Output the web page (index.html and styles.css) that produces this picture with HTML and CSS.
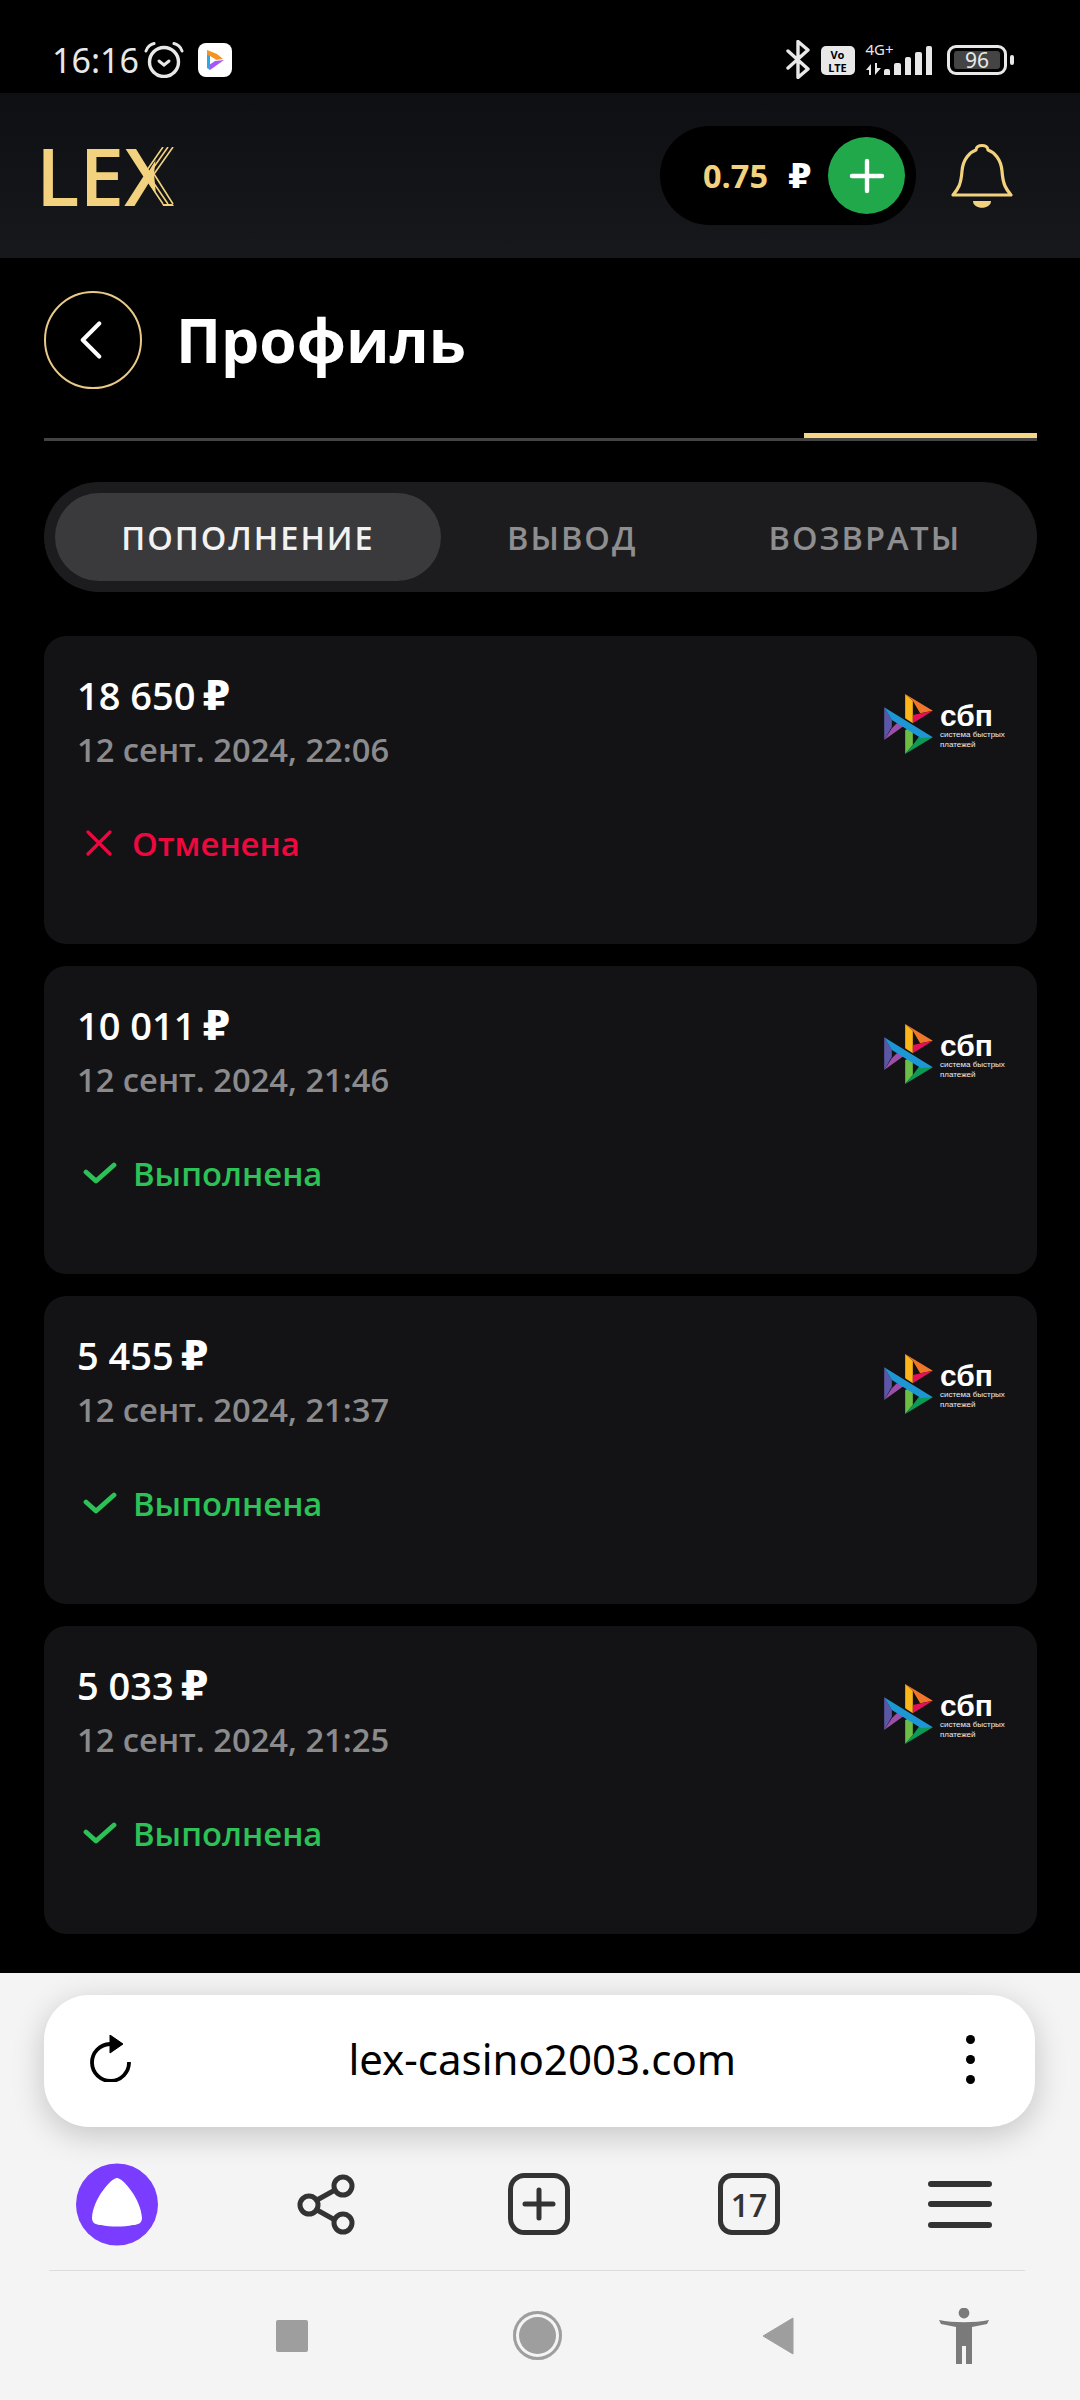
FILE: index.html
```html
<!DOCTYPE html>
<html lang="ru">
<head>
<meta charset="utf-8">
<title>Профиль</title>
<link rel="stylesheet" href="styles.css">
</head>
<body>
<div class="screen">
  <div class="statusbar">
    <div class="status-left">
      <span class="time">16:16</span>
      <svg class="alarm" viewBox="0 0 40 36"><g fill="none" stroke="#e8e8e8" stroke-linecap="round"><circle cx="20" cy="20" r="14.5" stroke-width="3.4"/><path d="M2 9C3 5 7 2 10 1.500M38 9C37 5 33 2 30 1.500" stroke-width="3"/><path d="M15 19l5 4 5-4" stroke-width="3"/></g></svg>
      <span class="appicon"><svg viewBox="0 0 34 34"><path d="M9 7l10 4 6 5-8 1-8-4z" fill="#f7931e"/><path d="M12 13l6 3.500-6 3.500z" fill="#fff"/><path d="M26 17l-14 10-1-5 6-4z" fill="#a855f7"/><path d="M9 12l3 1v14l-3-2z" fill="#29abe2"/></svg></span>
    </div>
    <div class="status-right">
      <svg class="bt" viewBox="0 0 24 39"><path d="M2 11l20 18-10 8.500V1.500L22 10 2 28" fill="none" stroke="#e8e8e8" stroke-width="3.400" stroke-linejoin="round" stroke-linecap="round"/></svg>
      <span class="volte"><span>Vo</span><span>LTE</span></span>
      <div class="net">
        <span class="net-label">4G+</span>
        <svg class="net-arrows" viewBox="0 0 15 12"><path d="M5 1v11H3V7H0zM9 12V0h2v5h4z" fill="#e8e8e8"/></svg>
      </div>
      <div class="bars"><i class="b1"></i><i class="b2"></i><i class="b3"></i><i class="b4"></i><i class="b5"></i></div>
      <div class="battery"><span class="cell">96</span></div><span class="nub"></span>
    </div>
  </div>

  <header class="topbar">
    <div class="logo">
      <span class="logo-text">LEX</span>
      <svg class="logo-stripes" viewBox="0 0 131 57"><path d="M110 27L113 -1H134V58H113z" fill="#131418"/><g stroke="#f2d27e" stroke-width="1.600" fill="none"><path d="M119 0L101 26M124 0L105 27M129 0L110 27M119 57L101 30M124 57L105 29M129 57L110 27"/></g></svg>
    </div>
    <div class="topbar-right">
      <div class="balance">
        <span class="amount">0.75</span>
        <span class="rub">₽</span>
        <span class="plus"><svg viewBox="0 0 36 36"><path d="M18 3v30M3 18h30" stroke="#fff" stroke-width="4.400" stroke-linecap="round"/></svg></span>
      </div>
      <svg class="bell" viewBox="0 0 62 66"><g fill="none" stroke="#f2d27e" stroke-width="3.200" stroke-linejoin="round"><path d="M2 52c5-6 8-10 9-24C12 16 19 9 25 7c0-6 12-6 12 0 6 2 13 9 14 21 1 14 4 18 9 24z"/></g><path d="M22 58h18c0 9-18 9-18 0z" fill="#f2d27e"/></svg>
    </div>
  </header>

  <main class="content">
    <div class="titlerow">
      <button class="back"><svg viewBox="0 0 24 42"><path d="M21 3L3 21l18 18" fill="none" stroke="#fff" stroke-width="4.400" stroke-linecap="round" stroke-linejoin="round"/></svg></button>
      <h1 class="title">Профиль</h1>
    </div>
    <div class="rule"><span class="rule-active"></span></div>

    <nav class="tabs">
      <span class="tab tab-active">ПОПОЛНЕНИЕ</span>
      <span class="tab tab-mid">ВЫВОД</span>
      <span class="tab tab-last">ВОЗВРАТЫ</span>
    </nav>

    <section class="cards">
      <article class="card">
        <div class="card-head">
          <div>
            <div class="sum">18 650 <span class="cur">₽</span></div>
            <div class="date">12 сент. 2024, 22:06</div>
          </div>
          <div class="sbp">
            <svg class="sbp-mark" viewBox="72 42 146 180"><use href="#sbpmark"/></svg>
            <div class="sbp-words"><span class="sbp-big">сбп</span><span class="sbp-small">система быстрых<br>платежей</span></div>
          </div>
        </div>
        <div class="state bad"><svg viewBox="0 0 26 26"><path d="M2 2l22 22M24 2L2 24" stroke="#f0073f" stroke-width="3.200" stroke-linecap="round"/></svg>Отменена</div>
      </article>
      <article class="card">
        <div class="card-head">
          <div>
            <div class="sum">10 011 <span class="cur">₽</span></div>
            <div class="date">12 сент. 2024, 21:46</div>
          </div>
          <div class="sbp">
            <svg class="sbp-mark" viewBox="72 42 146 180"><use href="#sbpmark"/></svg>
            <div class="sbp-words"><span class="sbp-big">сбп</span><span class="sbp-small">система быстрых<br>платежей</span></div>
          </div>
        </div>
        <div class="state ok"><svg viewBox="0 0 34 22"><path d="M3 10l10 9L31 3" fill="none" stroke="#2cc257" stroke-width="4.800" stroke-linecap="round" stroke-linejoin="round"/></svg>Выполнена</div>
      </article>
      <article class="card">
        <div class="card-head">
          <div>
            <div class="sum">5 455 <span class="cur">₽</span></div>
            <div class="date">12 сент. 2024, 21:37</div>
          </div>
          <div class="sbp">
            <svg class="sbp-mark" viewBox="72 42 146 180"><use href="#sbpmark"/></svg>
            <div class="sbp-words"><span class="sbp-big">сбп</span><span class="sbp-small">система быстрых<br>платежей</span></div>
          </div>
        </div>
        <div class="state ok"><svg viewBox="0 0 34 22"><path d="M3 10l10 9L31 3" fill="none" stroke="#2cc257" stroke-width="4.800" stroke-linecap="round" stroke-linejoin="round"/></svg>Выполнена</div>
      </article>
      <article class="card">
        <div class="card-head">
          <div>
            <div class="sum">5 033 <span class="cur">₽</span></div>
            <div class="date">12 сент. 2024, 21:25</div>
          </div>
          <div class="sbp">
            <svg class="sbp-mark" viewBox="72 42 146 180"><use href="#sbpmark"/></svg>
            <div class="sbp-words"><span class="sbp-big">сбп</span><span class="sbp-small">система быстрых<br>платежей</span></div>
          </div>
        </div>
        <div class="state ok"><svg viewBox="0 0 34 22"><path d="M3 10l10 9L31 3" fill="none" stroke="#2cc257" stroke-width="4.800" stroke-linecap="round" stroke-linejoin="round"/></svg>Выполнена</div>
      </article>
    </section>
  </main>

  <footer class="browser">
    <div class="urlbar">
      <svg class="reload" viewBox="0 0 42 47"><path d="M21 9A18.500 18.500 0 1 0 40 27" fill="none" stroke="#000" stroke-width="3.800"/><path d="M21 0l13 9-13 9z" fill="#000" stroke="#000" stroke-linejoin="round"/></svg>
      <span class="url">lex-casino2003.com</span>
      <span class="dots"><i></i><i></i><i></i></span>
    </div>
    <div class="toolbar">
      <svg class="alice" viewBox="0 0 82 83"><circle cx="41" cy="41.500" r="41" fill="#7a3dff"/><path d="M41 15c-6 0-24 21-25 40 0 5 4 7 9 7 10 2 22 2 32 0 5 0 9-2 9-7-1-19-19-40-25-40z" fill="#fff"/></svg>
      <svg class="share" viewBox="0 0 58 61"><g fill="none" stroke="#333" stroke-width="5"><circle cx="46" cy="12" r="9"/><circle cx="12" cy="31" r="9"/><circle cx="46" cy="49" r="9"/><path d="M20 26l18-10M20 36l18 10"/></g></svg>
      <svg class="newtab" viewBox="0 0 62 62"><rect x="2.500" y="2.500" width="57" height="57" rx="14" fill="none" stroke="#333" stroke-width="5"/><path d="M31 17v28M17 31h28" stroke="#333" stroke-width="5" stroke-linecap="round"/></svg>
      <div class="tabcount">17</div>
      <div class="burger"><i></i><i></i><i></i></div>
    </div>
    <div class="nav">
      <span class="nav-square"></span>
      <span class="nav-circle"></span>
      <svg class="nav-back" viewBox="0 0 32 38"><path d="M31 1v36L1 19z" fill="#9e9e9e" stroke="#9e9e9e" stroke-linejoin="round"/></svg>
      <svg class="nav-person" viewBox="0 0 50 56"><circle cx="25" cy="5" r="5.400" fill="#7a7a7a"/><path d="M0 12l2 4 15 3v37h6V38h4v18h6V19l15-3 2-4c-14 3-36 3-50 0z" fill="#7a7a7a"/></svg>
    </div>
  </footer>
</div>

<svg class="defs" width="0" height="0">
  <defs>
    <g id="sbpmark">
      <path d="M72 82v98l23-40v-20z" fill="#5b57a6"/>
      <path d="M72 180l63-45-25-5-15 15z" fill="#9b4ea8"/>
      <path d="M135 42l23 20v68l-23-15z" fill="#fbb61a"/>
      <path d="M135 42l83 50-38 8-22-38z" fill="#f0762a"/>
      <path d="M158 105l60-13-60 38z" fill="#e2125a"/>
      <path d="M135 150l23-10v55l-23 27z" fill="#6bbd45"/>
      <path d="M135 222l83-50-40-4-20 27z" fill="#0d9a56"/>
      <path d="M72 82l146 90-36 2L95 120z" fill="#1d97d4"/>
    </g>
  </defs>
</svg>
</body>
</html>
```
FILE: styles.css
```css
* { box-sizing: border-box; }
html, body { margin: 0; padding: 0; background: #000; }
body { font-family: "Open Sans", "Noto Sans", sans-serif; }
.screen { width: 1080px; height: 2400px; display: flex; flex-direction: column; overflow: hidden; background: #000; }
.defs { position: absolute; }

.statusbar { height: 93px; flex: none; display: flex; justify-content: space-between; align-items: flex-start; padding: 36px 66px 0 52px; }
.status-left { display: flex; align-items: center; height: 40px; margin-top: 4px; }
.time { font-family: "Noto Sans", sans-serif; font-size: 34px; line-height: 40px; color: #e8e8e8; width: 92px; }
.alarm { width: 40px; height: 36px; margin-top: -1px; }
.appicon { width: 34px; height: 34px; margin-left: 14px; background: #fff; border-radius: 8px; display: block; }
.appicon svg { display: block; width: 34px; height: 34px; }
.status-right { display: flex; align-items: flex-end; height: 40px; }
.bt { width: 24px; height: 39px; margin: 0 11px -3px 0; }
.volte { width: 34px; height: 29px; margin: 0 11px 1px 0; background: #e8e8e8; border-radius: 5px; display: flex; flex-direction: column; align-items: center; justify-content: center; color: #000; font-family: "Noto Sans", sans-serif; font-size: 11px; line-height: 13px; font-weight: 700; }
.net { width: 18px; height: 33px; margin-bottom: 1px; display: flex; flex-direction: column; justify-content: space-between; }
.net-label { font-family: "Noto Sans", sans-serif; font-size: 15px; line-height: 14px; color: #e8e8e8; white-space: nowrap; }
.net-arrows { width: 15px; height: 12px; }
.bars { display: flex; align-items: flex-end; gap: 4px; height: 30px; margin: 0 15px 1px 0; }
.bars i { width: 6.500px; background: #e8e8e8; border-radius: 2px 2px 0 0; display: block; }
.bars .b1 { height: 6px; } .bars .b2 { height: 12px; } .bars .b3 { height: 18px; } .bars .b4 { height: 23px; } .bars .b5 { height: 29px; }
.battery { width: 60px; height: 30px; border: 3px solid #e8e8e8; border-radius: 9px; padding: 3px 4px; margin-bottom: 1px; }
.cell { display: block; width: 100%; height: 100%; background: #444; border-radius: 3px; color: #e8e8e8; font-family: "Noto Sans", sans-serif; font-size: 21px; line-height: 18px; text-align: center; }
.nub { width: 4px; height: 10px; background: #e8e8e8; margin: 0 0 11px 3px; border-radius: 2px; }

.topbar { height: 165px; flex: none; background: linear-gradient(180deg, #0e0f13, #17181c); display: flex; justify-content: space-between; align-items: center; padding: 0 67px 0 44px; }
.logo { position: relative; width: 131px; height: 57px; }
.logo-text { display: block; font-family: "Open Sans", sans-serif; font-weight: 600; font-size: 80px; line-height: 55px; color: #f2d27e; margin-left: -8px; white-space: nowrap; }
.logo-stripes { position: absolute; left: 0; top: 0; width: 131px; height: 57px; }
.topbar-right { display: flex; align-items: center; }
.balance { width: 256px; height: 99px; background: #000; border-radius: 50px; display: flex; align-items: center; padding-left: 43px; }
.amount { font-size: 32.500px; font-weight: 700; color: #f2d27e; width: 85px; }
.rub { font-size: 34px; font-weight: 700; color: #fff; width: 40px; font-family: "DejaVu Sans", sans-serif; }
.plus { width: 77px; height: 77px; flex: none; background: #21a84a; border-radius: 50%; display: flex; align-items: center; justify-content: center; }
.plus svg { width: 36px; height: 36px; }
.bell { width: 62px; height: 66px; margin-left: 35px; }

.content { flex: 1; padding: 0 43px 0 44px; }
.titlerow { height: 180px; padding-top: 33px; display: flex; align-items: flex-start; }
.back { width: 98px; height: 98px; border: 2px solid #e9c987; border-radius: 50%; background: transparent; padding: 0; display: flex; align-items: center; justify-content: center; }
.back svg { width: 22px; height: 40px; margin-right: 5px; }
.title { margin: -1px 0 0 34px; font-size: 60.500px; line-height: 100px; font-weight: 700; color: #fff; }
.rule { height: 3px; background: #444; position: relative; }
.rule-active { position: absolute; right: 0; bottom: 3px; width: 233px; height: 5px; background: #f5d586; box-shadow: 0 -30px 40px rgba(245,213,134,.02); }

.tabs { height: 110px; margin-top: 41px; background: #1c1c1e; border-radius: 55px; padding: 11px; display: flex; align-items: center; }
.tab { font-size: 32.500px; font-weight: 600; letter-spacing: 2px; color: #8e8e90; white-space: nowrap; }
.tab-active { width: 386px; height: 88px; background: #3a3a3c; border-radius: 44px; color: #f2f2f2; display: flex; align-items: center; justify-content: center; }
.tab-mid { margin-left: 66px; }
.tab-last { margin-left: 131px; }

.cards { margin-top: 44px; display: flex; flex-direction: column; gap: 22px; }
.card { height: 308px; background: #131315; border-radius: 22px; padding: 34px 32px 0 33px; }
.card-head { display: flex; justify-content: space-between; }
.sum { font-size: 38px; line-height: 50px; font-weight: 600; color: #fff; white-space: nowrap; }
.cur { font-family: "DejaVu Sans", sans-serif; font-weight: 700; font-size: 40px; margin-left: -3px; }
.date { font-size: 32.700px; line-height: 44px; margin-top: 7px; font-weight: 600; color: #8b8b8d; white-space: nowrap; }
.state { margin-top: 49px; height: 44px; display: flex; align-items: center; font-size: 32.800px; font-weight: 600; }
.state svg { width: 34px; height: 22px; margin: 0 16px 0 6px; }
.bad { color: #f0073f; }
.bad svg { width: 26px; height: 26px; margin: 0 20px 0 9px; }
.ok { color: #2cc257; }
.sbp { display: flex; align-items: flex-start; margin-top: 24px; }
.sbp-mark { width: 49px; height: 60px; }
.sbp-words { width: 65px; display: flex; flex-direction: column; margin-left: 7px; margin-top: 9px; }
.sbp-big { font-family: "Liberation Sans", sans-serif; font-weight: 700; font-size: 30px; line-height: 26px; color: #fff; }
.sbp-small { font-family: "Liberation Sans", sans-serif; font-size: 8px; line-height: 10px; color: #eee; white-space: nowrap; margin-top: 1px; }

.browser { height: 427px; flex: none; background: #f4f4f4; padding: 22px 0 0; }
.urlbar { margin: 0 45px 0 44px; height: 132px; background: #fff; border-radius: 45px; box-shadow: 0 8px 32px rgba(0,0,0,.2); display: flex; align-items: center; padding: 0 60px 0 45px; }
.reload { width: 42px; height: 47px; flex: none; margin-top: -5px; }
.url { flex: 1; text-align: center; font-family: "Noto Sans", sans-serif; font-size: 42px; color: #000; white-space: nowrap; padding-right: 12px; margin-top: -5px; }
.dots { display: flex; flex-direction: column; gap: 10.500px; margin-top: -3px; }
.dots i { width: 9.500px; height: 9.500px; background: #000; border-radius: 50%; display: block; }
.toolbar { height: 143px; display: flex; align-items: center; padding: 11px 0 0 76px; }
.alice { width: 82px; height: 83px; flex: none; }
.share { width: 58px; height: 61px; margin-left: 139px; flex: none; }
.newtab { width: 62px; height: 62px; margin-left: 153px; flex: none; }
.tabcount { width: 62px; height: 62px; margin-left: 148px; flex: none; border: 5px solid #333; border-radius: 14px; color: #333; font-size: 32px; font-weight: 600; display: flex; align-items: center; justify-content: center; }
.burger { width: 64px; margin-left: 148px; display: flex; flex-direction: column; gap: 14.500px; flex: none; }
.burger i { display: block; height: 6px; background: #333; border-radius: 3px; }
.nav { height: 130px; margin: 0 55px 0 49px; border-top: 1px solid #ddd; display: flex; align-items: center; padding-left: 227px; }
.nav-square { width: 32px; height: 32px; background: #9e9e9e; border-radius: 2px; }
.nav-circle { width: 49px; height: 49px; margin-left: 205px; border-radius: 50%; background: #9e9e9e; box-shadow: inset 0 0 0 3px #9e9e9e, inset 0 0 0 6px #f4f4f4; }
.nav-back { width: 32px; height: 38px; margin-left: 200px; }
.nav-person { width: 50px; height: 56px; margin-left: 145px; }
```
